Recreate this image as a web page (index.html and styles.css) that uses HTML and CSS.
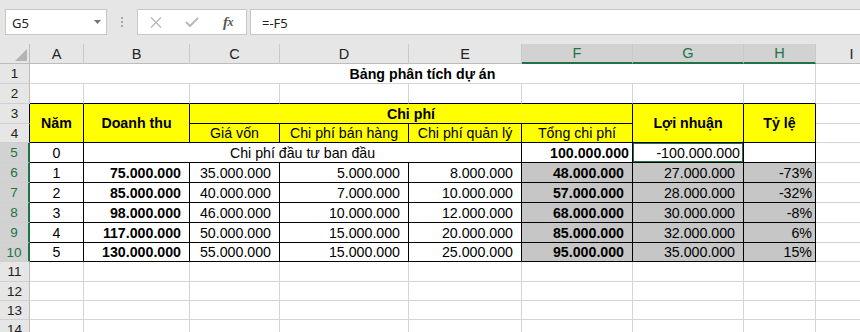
FILE: index.html
```html
<!DOCTYPE html>
<html lang="vi">
<head>
<meta charset="utf-8">
<title>Bảng phân tích dự án</title>
<link rel="stylesheet" href="styles.css">
</head>
<body>
<div class="app">
  <div class="fbar">
    <div class="namebox"><span>G5</span><svg class="dd" width="7" height="4" viewBox="0 0 7 4"><path d="M0 0H7L3.5 4Z" fill="#737373"/></svg></div>
    <div class="grip"><i></i><i></i><i></i></div>
    <div class="btns">
      <span class="slot"><svg width="12" height="11" viewBox="0 0 12 11"><path d="M1 0.5L11 10.5M11 0.5L1 10.5" stroke="#b8b8b8" stroke-width="1.4" fill="none"/></svg></span>
      <span class="slot"><svg width="14" height="10" viewBox="0 0 14 10"><path d="M1 5L5 9L13 1" stroke="#b8b8b8" stroke-width="2" fill="none"/></svg></span>
      <span class="slot fx">f<span class="fxx">x</span></span>
    </div>
    <div class="input">=-F5</div>
  </div>
  <div class="sheet">
    <div class="c corner"><svg width="12" height="12" viewBox="0 0 12 12"><path d="M12 0V12H0Z" fill="#b4b4b4"/></svg></div>
    <div class="c ch">A</div><div class="c ch">B</div><div class="c ch">C</div><div class="c ch">D</div><div class="c ch">E</div><div class="c ch selc">F</div><div class="c ch selc">G</div><div class="c ch selc">H</div><div class="c ch">I</div>

    <div class="c rh">1</div><div class="c span8 ctr b">Bảng phân tích dự án</div><div class="c"></div>

    <div class="c rh">2</div><div class="c tb"></div><div class="c tb"></div><div class="c tb"></div><div class="c tb"></div><div class="c tb"></div><div class="c tb"></div><div class="c tb"></div><div class="c tb"></div><div class="c"></div>

    <div class="c rh rhb">3</div>
    <div class="c t yl rs2 ctr b">Năm</div>
    <div class="c t yl rs2 ctr b">Doanh thu</div>
    <div class="c t yl span4 ctr b">Chi phí</div>
    <div class="c t yl rs2 ctr b">Lợi nhuận</div>
    <div class="c t yl rs2 ctr b">Tỷ lệ</div>
    <div class="c"></div>

    <div class="c rh rhb">4</div>
    <div class="c t yl ctr">Giá vốn</div>
    <div class="c t yl ctr">Chi phí bán hàng</div>
    <div class="c t yl ctr">Chi phí quản lý</div>
    <div class="c t yl ctr">Tổng chi phí</div>
    <div class="c"></div>

    <div class="c rh selr">5</div>
    <div class="c t ctr">0</div>
    <div class="c t span4 ctr">Chi phí đầu tư ban đầu</div>
    <div class="c t nums b">100.000.000</div>
    <div class="c t nums active">-100.000.000</div>
    <div class="c t"></div>
    <div class="c"></div>

    <div class="c rh selr">6</div>
    <div class="c t ctr">1</div><div class="c t num b">75.000.000</div><div class="c t num">35.000.000</div><div class="c t num">5.000.000</div><div class="c t num">8.000.000</div><div class="c t num b gr">48.000.000</div><div class="c t num gr">27.000.000</div><div class="c t nums gr">-73%</div>
    <div class="c"></div>

    <div class="c rh selr">7</div>
    <div class="c t ctr">2</div><div class="c t num b">85.000.000</div><div class="c t num">40.000.000</div><div class="c t num">7.000.000</div><div class="c t num">10.000.000</div><div class="c t num b gr">57.000.000</div><div class="c t num gr">28.000.000</div><div class="c t nums gr">-32%</div>
    <div class="c"></div>

    <div class="c rh selr">8</div>
    <div class="c t ctr">3</div><div class="c t num b">98.000.000</div><div class="c t num">46.000.000</div><div class="c t num">10.000.000</div><div class="c t num">12.000.000</div><div class="c t num b gr">68.000.000</div><div class="c t num gr">30.000.000</div><div class="c t nums gr">-8%</div>
    <div class="c"></div>

    <div class="c rh selr">9</div>
    <div class="c t ctr">4</div><div class="c t num b">117.000.000</div><div class="c t num">50.000.000</div><div class="c t num">15.000.000</div><div class="c t num">20.000.000</div><div class="c t num b gr">85.000.000</div><div class="c t num gr">32.000.000</div><div class="c t nums gr">6%</div>
    <div class="c"></div>

    <div class="c rh selr">10</div>
    <div class="c t ctr">5</div><div class="c t num b">130.000.000</div><div class="c t num">55.000.000</div><div class="c t num">15.000.000</div><div class="c t num">25.000.000</div><div class="c t num b gr">95.000.000</div><div class="c t num gr">35.000.000</div><div class="c t nums gr">15%</div>
    <div class="c"></div>

    <div class="c rh">11</div><div class="c"></div><div class="c"></div><div class="c"></div><div class="c"></div><div class="c"></div><div class="c"></div><div class="c"></div><div class="c"></div><div class="c"></div>
    <div class="c rh">12</div><div class="c"></div><div class="c"></div><div class="c"></div><div class="c"></div><div class="c"></div><div class="c"></div><div class="c"></div><div class="c"></div><div class="c"></div>
    <div class="c rh">13</div><div class="c"></div><div class="c"></div><div class="c"></div><div class="c"></div><div class="c"></div><div class="c"></div><div class="c"></div><div class="c"></div><div class="c"></div>
    <div class="c rh">14</div><div class="c"></div><div class="c"></div><div class="c"></div><div class="c"></div><div class="c"></div><div class="c"></div><div class="c"></div><div class="c"></div><div class="c"></div>
  </div>
</div>
</body>
</html>
```
FILE: styles.css
```css
* { box-sizing: border-box; margin: 0; padding: 0; }
html, body { width: 860px; height: 332px; overflow: hidden; background: #fff; }
body { font-family: "Liberation Sans", Arial, sans-serif; color: #000; }

.app { width: 860px; height: 332px; overflow: hidden; display: flex; flex-direction: column; }

/* formula bar */
.fbar { flex: none; height: 44px; background: #e6e6e6; display: flex; align-items: flex-start; padding-top: 9px; font-family: "Noto Sans", sans-serif; font-size: 13px; color: #222; }
.namebox { margin-left: 5px; width: 102px; height: 26px; background: #fff; border: 1px solid #c6c6c6; display: flex; align-items: center; justify-content: space-between; padding: 1px 5px 0 6px; }
.dd { display: block; margin-top: -2px; }
.grip { width: 30px; height: 26px; display: flex; flex-direction: column; align-items: center; justify-content: center; gap: 2px; }
.grip i { display: block; width: 2px; height: 2px; background: #a8a8a8; }
.btns { width: 110px; height: 26px; background: #fff; border: 1px solid #c6c6c6; display: flex; align-items: center; }
.slot { width: 36px; height: 24px; display: flex; align-items: center; justify-content: center; }
.slot svg { display: block; }
.fx { font-family: "Liberation Serif", serif; font-style: italic; font-size: 15px; color: #595959; font-weight: bold; letter-spacing: -0.5px; }
.fxx { font-size: 12px; }
.input { flex: 1; height: 26px; margin-left: 3px; background: #fff; border: 1px solid #c6c6c6; border-right: none; display: flex; align-items: center; padding: 1px 0 0 11px; }

/* sheet */
.sheet { display: grid; width: 888px; grid-template-columns: 30px 54px 106px 90px 129px 113px 111px 111px 72px 72px; grid-template-rows: 20px 20px 20px 20px 19px 20px 20px 20px 20px 20px 19px 20px 19px 19px 20px; font-size: 14.2px; }
.c { border-right: 1px solid #d4d4d4; border-bottom: 1px solid #d4d4d4; display: flex; align-items: center; white-space: nowrap; overflow: hidden; padding: 0 3px; }

.corner { background: #e6e6e6; border-right-color: #bcbcbc; border-bottom-color: #bcbcbc; align-items: flex-end; justify-content: flex-end; padding: 0 2px 2px 0; }
.corner svg { display: block; }
.ch { background: #e6e6e6; border-right-color: #c9c9c9; border-bottom-color: #bcbcbc; justify-content: center; font-size: 14.5px; color: #222; padding: 0; }
.rh { background: #e6e6e6; border-right-color: #bcbcbc; border-bottom-color: #cfcfcf; justify-content: center; font-size: 13.5px; color: #222; padding: 0; }
.rhb { border-right-color: #000; }
.selc { background: #d2d2d2; color: #217346; border-bottom: 2px solid #217346; }
.selr { background: #d2d2d2; color: #217346; border-right: 2px solid #217346; }

.tb { border-bottom-color: #000; }
.t { border-right-color: #000; border-bottom-color: #000; }
.yl { background: #ffff00; }
.gr { background: #c6c6c6; }
.b { font-weight: bold; }
.ctr { justify-content: center; }
.num { justify-content: flex-end; padding-right: 8px; }
.nums { justify-content: flex-end; padding-right: 3px; }
.active { box-shadow: inset 0 0 0 1px #217346; }

.span8 { grid-column: span 8; }
.span4 { grid-column: span 4; }
.rs2 { grid-row: span 2; }
```
